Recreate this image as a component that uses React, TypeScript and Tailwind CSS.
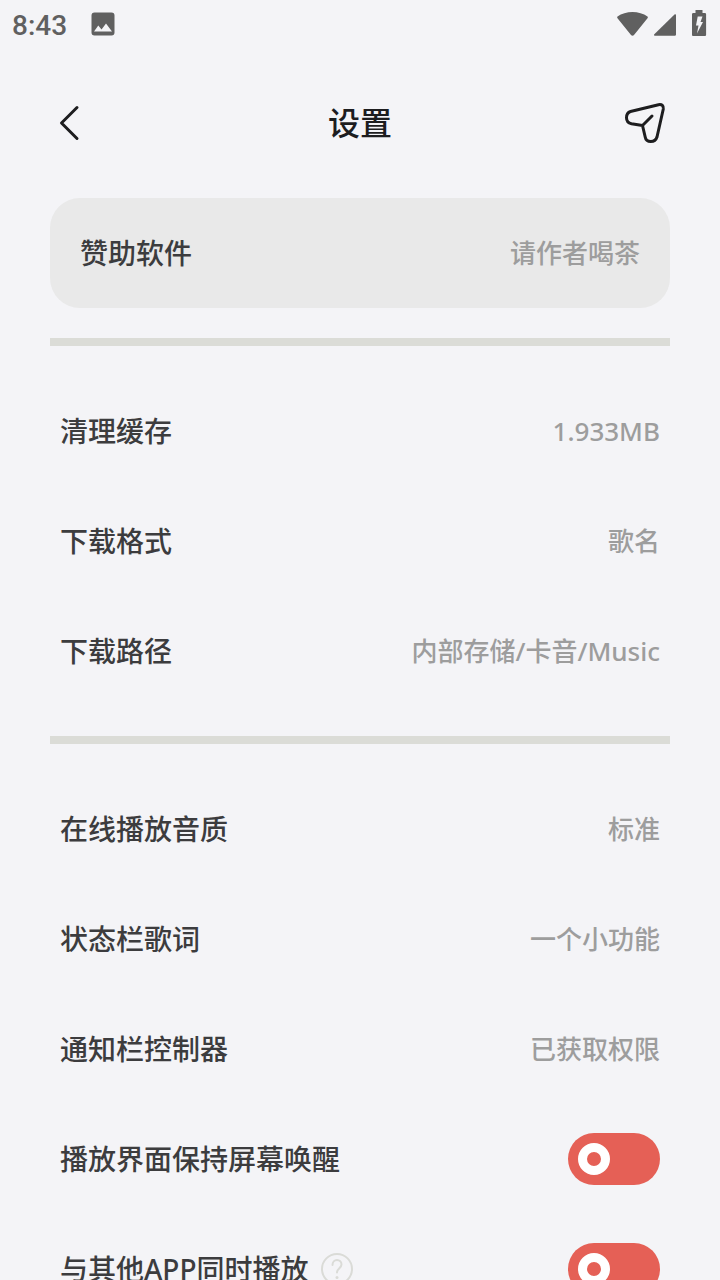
import { useState } from "react";

interface SettingItem {
  label: string;
  value: string;
}

const storageItems: SettingItem[] = [
  { label: "清理缓存", value: "1.933MB" },
  { label: "下载格式", value: "歌名" },
  { label: "下载路径", value: "内部存储/卡音/Music" },
];

const playbackItems: SettingItem[] = [
  { label: "在线播放音质", value: "标准" },
  { label: "状态栏歌词", value: "一个小功能" },
  { label: "通知栏控制器", value: "已获取权限" },
];

function StatusBar() {
  return (
    <div className="flex h-12 shrink-0 items-center justify-between px-3 text-[#606060]">
      <div className="flex items-center gap-6">
        <span className="pt-1 font-['Roboto',sans-serif] text-[28px] leading-8">8:43</span>
        <svg className="h-6 w-6" viewBox="0 0 24 24" fill="currentColor" aria-hidden="true">
          <path
            fillRule="evenodd"
            d="M3.500.5h17a3 3 0 0 1 3 3v17a3 3 0 0 1-3 3h-17a3 3 0 0 1-3-3v-17a3 3 0 0 1 3-3zM3 19.500h18l-6-8-4.500 6-3.200-4z"
          />
        </svg>
      </div>
      <div className="flex items-center">
        <svg className="h-7 w-8" viewBox="0 0 32 28" fill="currentColor" aria-hidden="true">
          <path d="M1.500 6.500C5.500 3.500 11 2 16.500 2S27.500 3.500 31.500 6.500c.5.500.5 1 .2 1.500L18 25c-.8 1-2.200 1-3 0L1.500 8.200C1.100 7.600 1 7 1.500 6.500z" />
        </svg>
        <svg className="ml-1 h-7 w-6" viewBox="0 0 24 28" fill="currentColor" aria-hidden="true">
          <path d="M22.500 4.500c.8-.7 1.500-.3 1.500.5v19.500c0 .8-.4 1.200-1.200 1.200H2.800c-.9 0-1.100-.8-.5-1.400z" />
        </svg>
        <svg className="ml-4 h-7 w-4" viewBox="0 0 16 28" fill="currentColor" aria-hidden="true">
          <path
            fillRule="evenodd"
            d="M3.500 0h7v3h2.300c.8 0 1.300.6 1.300 1.300v20.400c0 .8-.6 1.300-1.300 1.300H1.300C.5 26 0 25.400 0 24.700V4.300C0 3.600.6 3 1.300 3h2.200zM5.700 6.500 4 15.500h2.500L5 23.500 11 12H8.500l2-5.500z"
          />
        </svg>
      </div>
    </div>
  );
}

function Header() {
  return (
    <header className="flex h-[150px] shrink-0 items-center justify-between px-12 text-[#1d1d1f]">
      <button type="button" aria-label="返回" className="cursor-pointer">
        <svg className="h-12 w-12" viewBox="0 0 48 48" fill="none" stroke="currentColor" strokeWidth="3" strokeLinecap="round" strokeLinejoin="round">
          <path d="M29 8.500 13.500 24 29 39.500" />
        </svg>
      </button>
      <h1 className="text-[32px] leading-10 font-medium">设置</h1>
      <button type="button" aria-label="分享" className="cursor-pointer">
        <svg className="h-12 w-12" viewBox="0 0 48 48" fill="none" stroke="currentColor" strokeWidth="3" strokeLinecap="round" strokeLinejoin="round">
          <path d="M6.500 12.500 34.500 5.700c3.500-.7 5.200 1.200 4.800 4.300L33 38c-1 3-3 4.500-6.200 4.500S21.700 41 21.200 38L18.500 26.500 7.500 24.800C4 24 2.500 22 2.500 18.800c0-3.300 1.300-5.500 4-6.300zM18.500 26.500l9.500-9.500" />
        </svg>
      </button>
    </header>
  );
}

function SettingRow({ label, value }: SettingItem) {
  return (
    <button type="button" className="flex h-[110px] w-full cursor-pointer items-center justify-between px-2.5">
      <span className="text-[28px] leading-10 text-[#3c3c3e]">{label}</span>
      <span className="text-[26px] leading-10 text-[#9d9d9d]">{value}</span>
    </button>
  );
}

interface ToggleRowProps {
  id: string;
  label: string;
  hasHelp?: boolean;
}

function ToggleRow({ id, label, hasHelp }: ToggleRowProps) {
  const [checked, setChecked] = useState(false);

  return (
    <div className="flex h-[110px] items-center justify-between px-2.5">
      <div className="flex items-center gap-3">
        <label htmlFor={id} className="text-[28px] leading-10 text-[#3c3c3e]">
          {label}
        </label>
        {hasHelp && (
          <button type="button" aria-label="说明" className="cursor-pointer text-[#dadbd7]">
            <svg className="h-8 w-8" viewBox="0 0 32 32" fill="none" stroke="currentColor" strokeWidth="2" strokeLinecap="round" strokeLinejoin="round">
              <circle cx="16" cy="16" r="15" />
              <path d="M11.500 12c0-3 2-5 4.500-5s4.500 2 4.500 4.500c0 3.500-4.500 4-4.500 8" />
              <circle cx="16" cy="24.500" r="1.500" fill="currentColor" stroke="none" />
            </svg>
          </button>
        )}
      </div>
      <input
        id={id}
        type="checkbox"
        checked={checked}
        onChange={(e) => setChecked(e.target.checked)}
        className="flex h-[52px] w-[92px] shrink-0 cursor-pointer appearance-none items-center rounded-full bg-[#e56056] px-2.5 before:h-8 before:w-8 before:rounded-full before:border-9 before:border-white before:transition-transform checked:before:translate-x-10"
      />
    </div>
  );
}

function Divider() {
  return <hr className="my-[30px] h-2 border-0 bg-[#dbdcd7]" />;
}

export default function App() {
  return (
    <div
      lang="zh-CN"
      className="flex h-screen flex-col bg-[#f4f4f7] font-['Noto_Sans','Noto_Sans_CJK_SC',sans-serif] font-medium"
    >
      <StatusBar />
      <Header />

      <main className="min-h-0 flex-1 overflow-y-auto px-[50px] [scrollbar-width:none] [&::-webkit-scrollbar]:hidden">
        <div className="rounded-[30px] bg-[#e9e9e9] px-5">
          <SettingRow label="赞助软件" value="请作者喝茶" />
        </div>

        <Divider />

        {storageItems.map((item) => (
          <SettingRow key={item.label} {...item} />
        ))}

        <Divider />

        {playbackItems.map((item) => (
          <SettingRow key={item.label} {...item} />
        ))}
        <ToggleRow id="keep-awake" label="播放界面保持屏幕唤醒" />
        <ToggleRow id="mix-audio" label="与其他APP同时播放" hasHelp />
      </main>
    </div>
  );
}
